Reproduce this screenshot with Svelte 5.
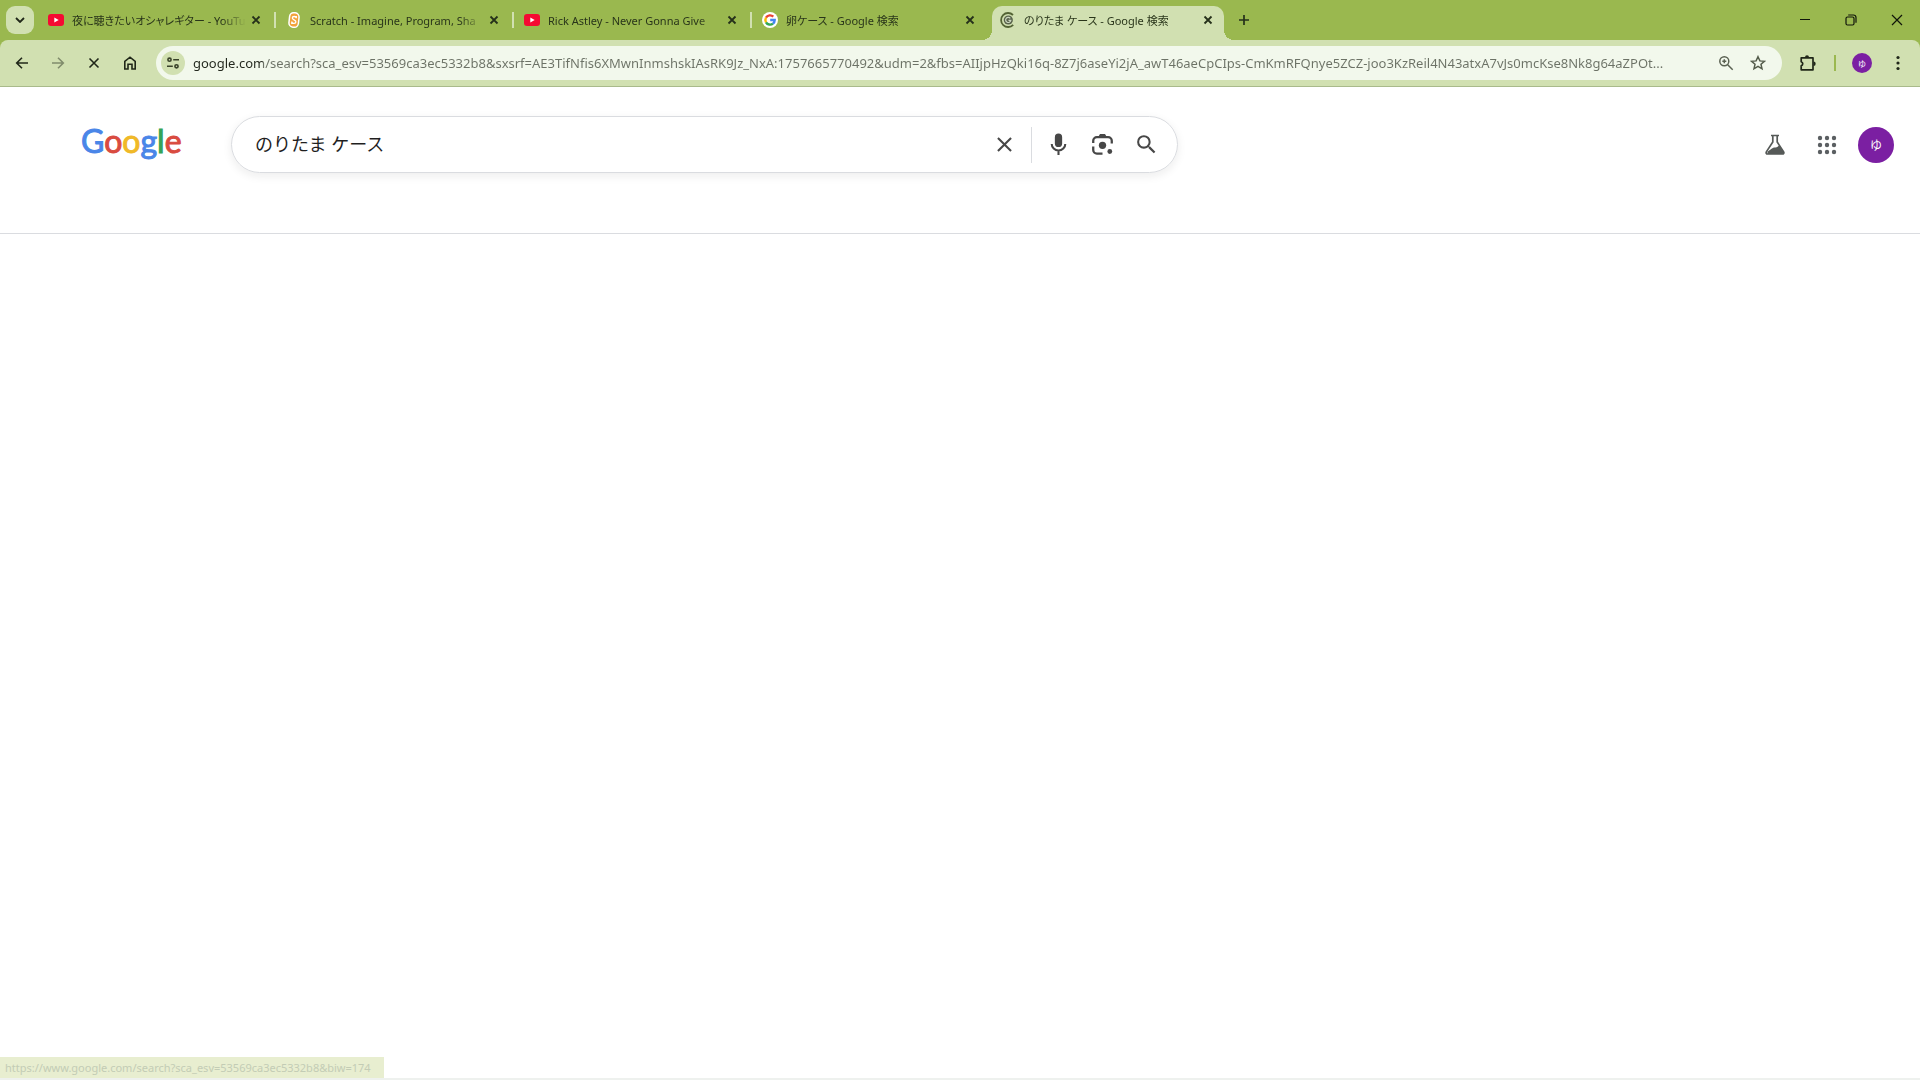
<script>
  const tabs = [
    { icon: "youtube", title: "夜に聴きたいオシャレギター - YouTu" },
    { icon: "scratch", title: "Scratch - Imagine, Program, Sha" },
    { icon: "youtube", title: "Rick Astley - Never Gonna Give" },
    { icon: "google", title: "卵ケース - Google 検索" },
    { icon: "loading", title: "のりたま ケース - Google 検索" },
  ];

  let active = $state(4);
  let query = $state("のりたま ケース");
  let url = $state(
    "google.com/search?sca_esv=53569ca3ec5332b8&sxsrf=AE3TifNfis6XMwnInmshskIAsRK9Jz_NxA:1757665770492&udm=2&fbs=AIIjpHzQki16q-8Z7j6aseYi2jA_awT46aeCpCIps-CmKmRFQnye5ZCZ-joo3KzReil4N43atxA7vJs0mcKse8Nk8g64aZPOt..."
  );
</script>

{#snippet favicon(name)}
  <svg class="favicon" viewBox="0 0 16 16" aria-hidden="true">
    {#if name === "youtube"}
      <rect x="0" y="2" width="16" height="12" rx="3" fill="#f50a32" />
      <path d="M6.3 5.4v5.2L10.7 8z" fill="#fff" />
    {:else if name === "scratch"}
      <rect x="2.5" y="0" width="11" height="16" rx="5" fill="#fff" transform="rotate(6 8 8)" />
      <rect x="4" y="1.5" width="8" height="13" rx="3.5" fill="#f3a33c" transform="rotate(6 8 8)" />
      <path
        d="M10.2 5.8c-.2-1.7-3.9-1.9-3.9.3 0 2 3.9 1.5 3.6 3.8-.2 2.2-3.9 2-4-.2M10.3 4v2.2M5.8 12V9.5"
        fill="none"
        stroke="#fff"
        stroke-width="1.3"
      />
    {:else if name === "google"}
      <circle cx="8" cy="8" r="8" fill="#fff" />
      <g fill="none" stroke-width="2.4">
        <path d="M4 5.7A4.7 4.7 0 0 1 11.3 4.7" stroke="#ea4335" />
        <path d="M4 10.3A4.7 4.7 0 0 1 4 5.7" stroke="#fbbc05" />
        <path d="M11 11.6A4.7 4.7 0 0 1 4 10.3" stroke="#34a853" />
        <path d="M8.2 8h4.5A4.7 4.7 0 0 1 11 11.6" stroke="#4285f4" />
      </g>
    {:else}
      <path d="M13 3A7 7 0 1 0 13.2 12.8" fill="none" stroke="#536334" stroke-width="1.8" />
      <circle cx="8.3" cy="8" r="4.6" fill="#59634c" />
      <path d="M10.3 6.3A2.6 2.6 0 1 0 10.8 8.4H8.5" fill="none" stroke="#cbd6be" stroke-width="1.2" />
    {/if}
  </svg>
{/snippet}

{#snippet cross()}
  <svg width="10" height="10" viewBox="0 0 10 10" aria-hidden="true">
    <path d="M1.5 1.5l7 7M8.5 1.5l-7 7" stroke="#25301a" stroke-width="1.8" />
  </svg>
{/snippet}

<div class="browser">
  <div class="tabstrip">
    <button class="tab-search" aria-label="タブを検索">
      <svg width="10" height="6" viewBox="0 0 10 6"><path d="M1 1l4 4 4-4" fill="none" stroke="#202719" stroke-width="1.8" /></svg>
    </button>
    <div class="tabs">
      {#each tabs as tab, i}
        <div class="tab" class:active={i === active}>
          <button class="tab__select" onclick={() => (active = i)}>
            {@render favicon(tab.icon)}
            <span class="tab__title">{tab.title}</span>
          </button>
          <button class="tab__close" aria-label="閉じる">{@render cross()}</button>
        </div>
      {/each}
    </div>
    <button class="new-tab" aria-label="新しいタブ">
      <svg width="12" height="12" viewBox="0 0 12 12"><path d="M6 1v10M1 6h10" stroke="#25301a" stroke-width="1.7" /></svg>
    </button>
    <div class="window-buttons">
      <button aria-label="最小化">
        <svg width="12" height="12" viewBox="0 0 12 12"><path d="M1 5.5h10" stroke="#10150a" /></svg>
      </button>
      <button aria-label="元に戻す">
        <svg width="12" height="12" viewBox="0 0 12 12" fill="none" stroke="#10150a" stroke-width="1.2">
          <rect x="1" y="3" width="8" height="8" rx="1.5" />
          <path d="M3.2 1h5.3A2.5 2.5 0 0 1 11 3.5v5.3" />
        </svg>
      </button>
      <button aria-label="ウィンドウを閉じる">
        <svg width="12" height="12" viewBox="0 0 12 12"><path d="M1 1l10 10M11 1L1 11" stroke="#10150a" stroke-width="1.2" /></svg>
      </button>
    </div>
  </div>

  <div class="toolbar">
    <div class="nav">
      <button aria-label="戻る">
        <svg viewBox="0 0 16 16"><path d="M14 8H3M8 2.7L2.7 8 8 13.3" /></svg>
      </button>
      <button class="disabled" aria-label="進む" disabled>
        <svg viewBox="0 0 16 16"><path d="M2 8h11M8 2.7L13.3 8 8 13.3" /></svg>
      </button>
      <button aria-label="中止">
        <svg viewBox="0 0 16 16"><path d="M3.5 3.5l9 9M12.5 3.5l-9 9" /></svg>
      </button>
      <button aria-label="ホーム">
        <svg viewBox="0 0 16 16"><path d="M2.8 6.3L8 2.2l5.2 4.1V14H10V9.3H6V14H2.8z" /></svg>
      </button>
    </div>
    <div class="omnibox">
      <button class="site-info" aria-label="サイト情報を表示">
        <svg width="14" height="14" viewBox="0 0 14 14" fill="none" stroke="#384129" stroke-width="1.6">
          <circle cx="3.5" cy="3.7" r="1.6" />
          <path d="M7.2 3.7H13M1 10.3h5.8" />
          <circle cx="10.5" cy="10.3" r="1.6" />
        </svg>
      </button>
      <input class="url" type="text" aria-label="アドレス検索バー" bind:value={url} spellcheck="false" />
      <button aria-label="ズーム">
        <svg width="16" height="16" viewBox="0 0 16 16" fill="none" stroke="#5a6152" stroke-width="1.5">
          <circle cx="6.3" cy="6.3" r="4.5" />
          <path d="M9.7 9.7l5 5M6.3 4.3v4M4.3 6.3h4" />
        </svg>
      </button>
      <button aria-label="ブックマーク">
        <svg width="16" height="16" viewBox="0 0 16 16" fill="none" stroke="#545c4b" stroke-width="1.5">
          <path d="M8 1.7l1.9 4.2 4.5.4-3.4 3 1 4.5L8 11.4l-4 2.4 1-4.5-3.4-3 4.5-.4z" />
        </svg>
      </button>
    </div>
    <div class="actions">
      <button aria-label="拡張機能">
        <svg width="18" height="18" viewBox="0 0 18 18">
          <path d="M2.2 3.8h11.8v12H2.2v-3.9a2.2 2.2 0 0 0 0-4.2z" fill="none" stroke="#202719" stroke-width="1.7" stroke-linejoin="round" />
          <path d="M6 3.3a2 2 0 0 1 4 0zM14.5 7.5a2.2 2.2 0 0 1 0 4.4z" fill="#202719" />
        </svg>
      </button>
      <span class="divider"></span>
      <button class="profile" aria-label="プロフィール">ゆ</button>
      <button aria-label="メニュー">
        <svg width="4" height="16" viewBox="0 0 4 16" fill="#202719">
          <circle cx="2" cy="2.5" r="1.6" /><circle cx="2" cy="8" r="1.6" /><circle cx="2" cy="13.5" r="1.6" />
        </svg>
      </button>
    </div>
  </div>

  <main>
    <header>
      <a class="logo" href="/" aria-label="Google"
        ><span class="blue">G</span><span class="red">o</span><span class="yellow">o</span><span class="blue">g</span><span
          class="green">l</span
        ><span class="red">e</span></a
      >
      <form class="search" onsubmit={(e) => e.preventDefault()}>
        <input type="text" aria-label="検索" bind:value={query} spellcheck="false" />
        <button class="clear" type="button" aria-label="クリア" onclick={() => (query = "")}>
          <svg viewBox="0 0 24 24"><path d="M19 6.41L17.59 5 12 10.59 6.41 5 5 6.41 10.59 12 5 17.59 6.41 19 12 13.41 17.59 19 19 17.59 13.41 12z" /></svg>
        </button>
        <button type="button" aria-label="音声で検索">
          <svg viewBox="0 0 24 24">
            <path d="M12 14.5a3.5 3.5 0 0 0 3.5-3.5V5a3.5 3.5 0 0 0-7 0v6a3.5 3.5 0 0 0 3.5 3.5z" />
            <path d="M5.5 11.5a6.5 6.3 0 0 0 13 0M12 17.8V22" fill="none" stroke="#474747" stroke-width="2" />
          </svg>
        </button>
        <button type="button" aria-label="画像で検索">
          <svg viewBox="0 0 24 24">
            <path
              d="M3.1 10.5V8.5a3.5 3.5 0 0 1 3.5-3.5h10.8a3.5 3.5 0 0 1 3.5 3.5v2.5M3.1 14v3.2a3.5 3.5 0 0 0 3.5 3.5H12"
              fill="none"
              stroke="#474747"
              stroke-width="2.2"
            />
            <path d="M8 4.5L9.6 2h4.8L16 4.5z" />
            <circle cx="12" cy="12.8" r="3.5" />
            <circle cx="19" cy="18.7" r="2.3" />
          </svg>
        </button>
        <button type="submit" aria-label="検索する">
          <svg viewBox="0 0 24 24">
            <path d="M15.5 14h-.79l-.28-.27A6.47 6.47 0 0 0 16 9.5 6.5 6.5 0 1 0 9.5 16c1.61 0 3.09-.59 4.23-1.57l.27.28v.79l5 4.99L20.49 19l-4.99-5zm-6 0C7.01 14 5 11.99 5 9.5S7.01 5 9.5 5 14 7.01 14 9.5 11.99 14 9.5 14z" />
          </svg>
        </button>
      </form>
      <div class="account">
        <button aria-label="Search Labs">
          <svg width="24" height="24" viewBox="0 0 24 24">
            <path d="M8 2.5h8M9.8 3v6L3.5 18.6c-.8 1.3-.2 2.4 1.2 2.4h14.6c1.4 0 2-1.1 1.2-2.4L14.2 9V3" fill="none" stroke="#565a58" stroke-width="1.7" />
            <path d="M4.5 18.5c3-1.3 4.5-4.3 8-4 1.8 0 2.5-1.4 4-1.9l4.2 6.6-1 1.8H4.5z" fill="#565a58" />
          </svg>
        </button>
        <button aria-label="Google アプリ">
          <svg width="20" height="20" viewBox="0 0 20 20" fill="#5b5f62">
            {#each [3, 10, 17] as y}
              {#each [3, 10, 17] as x}
                <circle cx={x} cy={y} r="2.2" />
              {/each}
            {/each}
          </svg>
        </button>
        <button class="avatar" aria-label="Google アカウント">ゆ</button>
      </div>
    </header>
  </main>

  <div class="status">https://www.google.com/search?sca_esv=53569ca3ec5332b8&amp;biw=174</div>
</div>

<style>
  :global(body) {
    margin: 0;
    background-color: #fff;
  }

  .browser {
    position: relative;
    box-sizing: border-box;
    min-height: 100vh;
    display: flex;
    flex-direction: column;
    border-bottom: 2px solid #eef1ee;
    background-color: #9ab84f;
    font-family: "Noto Sans", "Noto Sans CJK JP", sans-serif;
    color: #1f1f1f;
  }

  button {
    display: flex;
    align-items: center;
    justify-content: center;
    flex-shrink: 0;
    padding: 0;
    border: none;
    background: none;
    font: inherit;
    color: inherit;
  }

  svg {
    flex-shrink: 0;
  }

  input {
    min-width: 0;
    flex: 1;
    padding: 0;
    border: none;
    outline: none;
    background: none;
    font: inherit;
  }

  /* Onglets */
  .tabstrip {
    display: flex;
    align-items: center;
    height: 40px;
    padding-left: 6px;
  }

  .tab-search {
    width: 28px;
    height: 28px;
    border-radius: 9px;
    background-color: #d1e0b1;
  }

  .tabs {
    display: flex;
    align-self: stretch;
    align-items: flex-end;
    padding-left: 4px;
    flex: 0 1 1190px;
    min-width: 0;
  }

  .tab {
    position: relative;
    box-sizing: border-box;
    display: flex;
    align-items: center;
    flex: 1;
    min-width: 0;
    height: 34px;
    margin: 0 4px 0 2px;
    padding: 0 8px 6px;
    font-size: 11px;
    color: #29351a;
  }

  .tab:not(.active)::after {
    content: "";
    position: absolute;
    right: -4px;
    top: 6px;
    width: 2px;
    height: 16px;
    background-color: #d1e0b1;
  }

  .tab:nth-last-child(2)::after {
    display: none;
  }

  .tab.active {
    border-radius: 10px 10px 0 0;
    background-color: #d1e0b1;
  }

  .tab.active::before,
  .tab.active::after {
    content: "";
    position: absolute;
    bottom: 0;
    width: 10px;
    height: 10px;
  }

  .tab.active::before {
    right: 100%;
    background: radial-gradient(circle at 0 0, transparent 10px, #d1e0b1 10px);
  }

  .tab.active::after {
    left: 100%;
    background: radial-gradient(circle at 100% 0, transparent 10px, #d1e0b1 10px);
  }

  .tab__select {
    flex: 1;
    min-width: 0;
    gap: 8px;
    justify-content: flex-start;
  }

  .favicon {
    width: 16px;
    height: 16px;
  }

  .tab__title {
    flex: 1;
    padding-top: 2px;
    overflow: hidden;
    white-space: nowrap;
    text-align: left;
    line-height: 18px;
    font-feature-settings: "palt";
    mask-image: linear-gradient(to left, transparent, #000 24px);
  }

  .tab__close {
    width: 16px;
    height: 16px;
    margin-left: 2px;
  }

  .new-tab {
    width: 28px;
    height: 28px;
    margin-left: 2px;
  }

  .window-buttons {
    display: flex;
    align-self: stretch;
    margin-left: auto;
  }

  .window-buttons button {
    width: 46px;
  }

  /* Barre d'adresse */
  .toolbar {
    display: flex;
    align-items: center;
    height: 46px;
    border-bottom: 1px solid #a9ba8b;
    border-radius: 8px 8px 0 0;
    background-color: #d1e0b1;
  }

  .nav {
    display: flex;
    gap: 8px;
    padding: 0 12px 0 8px;
  }

  .nav button {
    width: 28px;
    height: 28px;
  }

  .nav svg {
    width: 16px;
    height: 16px;
    fill: none;
    stroke: #202719;
    stroke-width: 1.6;
  }

  .nav .disabled {
    opacity: 0.45;
  }

  .omnibox {
    box-sizing: border-box;
    display: flex;
    align-items: center;
    flex: 1;
    min-width: 0;
    height: 34px;
    padding: 0 8px 0 5px;
    border-radius: 17px;
    background-color: #f2f8ec;
  }

  .omnibox button {
    width: 32px;
    height: 24px;
  }

  .omnibox .site-info {
    width: 24px;
    border-radius: 50%;
    background-color: #d1e0b1;
  }

  .url {
    margin: 0 10px 0 8px;
    font-size: 13px;
    line-height: 20px;
    color: transparent;
    background: linear-gradient(to right, #23281e 70px, #6c7266 70px);
    background-clip: text;
    text-overflow: ellipsis;
  }

  .actions {
    display: flex;
    align-items: center;
    gap: 16px;
    padding: 0 12px 0 16px;
  }

  .actions button {
    width: 20px;
    height: 20px;
  }

  .divider {
    width: 2px;
    height: 16px;
    background-color: #9ab84f;
  }

  .actions .profile {
    border-radius: 50%;
    background-color: #7b1fa2;
    color: #fff;
    font-size: 8px;
  }

  /* Page */
  main {
    flex: 1;
    background-color: #fff;
  }

  header {
    box-sizing: border-box;
    display: flex;
    align-items: flex-start;
    height: 147px;
    padding: 29px 26px 0 81px;
    border-bottom: 1px solid #dadce0;
  }

  .logo {
    width: 150px;
    flex-shrink: 0;
    font-family: Lato, sans-serif;
    font-size: 32px;
    line-height: 50px;
    text-decoration: none;
    -webkit-text-stroke: 1px;
  }

  .blue {
    color: #4a86e8;
  }

  .red {
    color: #d94b40;
  }

  .yellow {
    color: #f0b928;
  }

  .green {
    color: #35a455;
  }

  .search {
    box-sizing: border-box;
    display: flex;
    align-items: center;
    flex: 0 1 947px;
    height: 57px;
    padding: 0 9px 0 23px;
    border: 1px solid #dadce0;
    border-radius: 29px;
    box-shadow: 0 3px 10px rgba(31, 31, 31, 0.08);
  }

  .search input {
    padding-bottom: 2px;
    font-size: 18px;
    line-height: 28px;
    color: #1f1f1f;
  }

  .search button {
    width: 44px;
    height: 36px;
  }

  .search .clear {
    width: 54px;
    margin-right: 4px;
    border-right: 1px solid #dadce0;
  }

  .search svg {
    width: 25px;
    height: 25px;
    fill: #474747;
  }

  .account {
    display: flex;
    align-items: center;
    height: 57px;
    margin-left: auto;
  }

  .account button {
    width: 52px;
    height: 36px;
  }

  .account .avatar {
    width: 36px;
    margin-left: 5px;
    border-radius: 50%;
    background-color: #7b1fa2;
    color: #fff;
    font-size: 12px;
  }

  .status {
    position: absolute;
    left: 0;
    bottom: 0;
    box-sizing: border-box;
    width: 384px;
    height: 21px;
    padding-left: 5px;
    white-space: nowrap;
    font-size: 11px;
    line-height: 21px;
    background-color: #e8eed0;
    color: #c3ccb5;
  }
</style>
